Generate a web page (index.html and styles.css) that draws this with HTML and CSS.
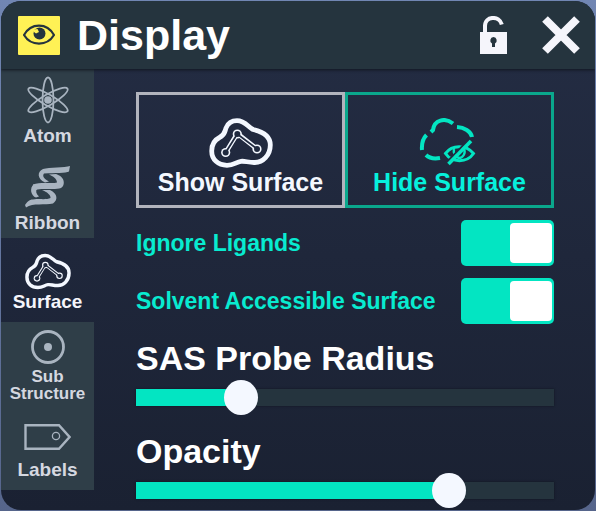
FILE: index.html
```html
<!DOCTYPE html>
<html lang="en">
<head>
<meta charset="utf-8">
<title>Display</title>
<link rel="stylesheet" href="styles.css">
</head>
<body>
<svg class="defs" aria-hidden="true">
  <symbol id="surface" viewBox="0 0 64 50">
    <path d="M28 2.7C36 2.7 39 9 44 11.5C53 13.5 61.3 18 61.3 27C61.3 37 54 45 45 44.5C39 44.5 36 42.8 32 43.3C27 44 25 47.3 18 47.3C9 47.3 2.7 41.5 2.7 33C2.7 26 5.500 22 10.500 19.5C16 17 15.500 14 17 10C19 5 23 2.700 28 2.700Z" fill="none" stroke="currentColor" stroke-width="4.800"/>
    <g fill="none" stroke="currentColor" stroke-width="4.600"><path d="M17 34L28.300 15.500L48 31"/></g>
    <g fill="currentColor"><circle cx="28.300" cy="16" r="4.600"/><circle cx="16.700" cy="34.500" r="4.600"/><circle cx="48" cy="31" r="4.600"/></g>
    <path class="hollow-line" d="M17 34L28.300 16L48 31"/>
    <g class="hollow"><circle cx="28.300" cy="16" r="3"/><circle cx="16.700" cy="34.500" r="3"/><circle cx="48" cy="31" r="3"/></g>
  </symbol>
</svg>
<div class="panel">
  <header class="header">
    <span class="badge">
      <svg width="32" height="22" viewBox="0 0 32 22" aria-hidden="true">
        <path d="M1 11C8-1.500 24-1.500 31 11C24 22.500 8 22.500 1 11Z" fill="none" stroke="currentColor" stroke-width="2.200"/>
        <circle cx="16.500" cy="9.500" r="6" fill="currentColor"/>
        <path d="M11 5.500L14.500 5L16 8L13 9.500L11 8Z" fill="#fff155"/>
      </svg>
    </span>
    <h1 class="title">Display</h1>
    <button class="icon-button" type="button" aria-label="Unlock panel">
      <svg width="27" height="38" viewBox="0 0 27 38" aria-hidden="true">
        <path d="M5 17V10C5-.5 19.500-.5 21.800 8.500" fill="none" stroke="currentColor" stroke-width="4"/>
        <path d="M0 16H27V38H0Z" fill="currentColor"/>
        <path class="keyhole" d="M13.500 21A3.500 3.500 0 0 0 12 27.500V31H15V27.500A3.500 3.500 0 0 0 13.500 21Z"/>
      </svg>
    </button>
    <button class="icon-button" type="button" aria-label="Close">
      <svg width="38" height="38" viewBox="0 0 38 38" aria-hidden="true"><path d="M3 3L35 35M35 3L3 35" stroke="currentColor" stroke-width="8"/></svg>
    </button>
  </header>
  <div class="body">
    <nav class="tabs" aria-label="Display sections">
      <button class="tab tab-atom" type="button">
        <svg width="42" height="48" viewBox="-21 -24 42 48" aria-hidden="true">
          <g fill="none" stroke="currentColor" stroke-width="1.800"><ellipse rx="5.500" ry="22.500"/><ellipse rx="5.500" ry="22.500" transform="rotate(60)"/><ellipse rx="5.500" ry="22.500" transform="rotate(-60)"/></g>
          <circle r="3.800" fill="currentColor"/>
        </svg>
        <span>Atom</span>
      </button>
      <button class="tab tab-ribbon" type="button">
        <svg width="46" height="42" viewBox="0 0 46 42" aria-hidden="true">
          <g fill="currentColor">
            <path d="M45 0C40 2 24 1 18 3C12 5.500 12 13 20 16.500L24 15.500C19 13 17 10 19 7.500C30 7 41 7 44 5.500Z"/>
            <path d="M24 8.500L31 8C41 11 40 20 36 22C30 24.500 16 21.500 11 24L8 18.500C16 15.500 27 18 32 16.500C32 13 28 10 24 8.500Z"/>
            <path d="M9 18C4 22 6 30 11 31.500L14 30.500C11 28 10.500 25 12 22.500Z"/>
            <path d="M17 24L25 24C33 28 33 34 28 37.500C20 39.500 8 36.500 1 41.500L0 39C2 36 4 33.500 8 33.500C15 32.500 22 34 25.500 32C26 29 22 26 17 24Z"/>
          </g>
        </svg>
        <span>Ribbon</span>
      </button>
      <button class="tab tab-active" type="button" aria-current="page">
        <svg width="46" height="37" aria-hidden="true"><use href="#surface"/></svg>
        <span>Surface</span>
      </button>
      <button class="tab tab-sub" type="button">
        <svg width="34" height="34" viewBox="0 0 34 34" aria-hidden="true"><circle cx="17" cy="17" r="15.500" fill="none" stroke="currentColor" stroke-width="2.800"/><circle cx="17" cy="17" r="4" fill="currentColor"/></svg>
        <span class="two-lines">Sub Structure</span>
      </button>
      <button class="tab" type="button">
        <svg class="tag" width="47" height="26" viewBox="0 0 47 26" aria-hidden="true"><g fill="none" stroke="currentColor"><path d="M1.500 1.300H35L45.500 13L35 24.700H1.500Z" stroke-width="2.400"/><circle cx="32" cy="12" r="3.600" stroke-width="1.300"/></g></svg>
        <span>Labels</span>
      </button>
    </nav>
    <main class="content">
      <div class="choices">
        <button class="choice" type="button">
          <svg width="64" height="50" aria-hidden="true"><use href="#surface"/></svg>
          <span>Show Surface</span>
        </button>
        <button class="choice choice-hide" type="button">
          <svg width="64" height="50" viewBox="-2 0 64 50" aria-hidden="true">
            <g fill="none" stroke="currentColor" stroke-width="4">
              <path d="M11 14L13 12C14 2 25-1 33 5.500M37 9C44 9.500 51 13 52 19M6.500 17C2.500 21 1.500 26 2 32M6 37C9 40 14 41 20 40"/>
              <path d="M25.500 35.500C32 26.500 46 26.500 53.500 35.500C47 45 32 45 25.500 35.500Z" stroke-width="3"/>
              <path d="M34 31C33 35 35 39 39 40C43 40 46 35 44 31" stroke-width="2.400"/>
            </g>
            <path class="slash-gap" d="M26.500 44.500L49 21.500"/>
            <path d="M28.500 46L51 23" stroke="currentColor" stroke-width="3.600"/>
          </svg>
          <span>Hide Surface</span>
        </button>
      </div>
      <div class="option"><label for="ligands">Ignore Ligands</label><input class="switch" id="ligands" type="checkbox" role="switch" checked></div>
      <div class="option"><label for="sas">Solvent Accessible Surface</label><input class="switch" id="sas" type="checkbox" role="switch" checked></div>
      <div class="range-group">
        <label for="radius">SAS Probe Radius</label>
        <input class="slider" id="radius" type="range" min="0" max="100" value="23" style="--value: 0.23">
      </div>
      <div class="range-group">
        <label for="opacity">Opacity</label>
        <input class="slider" id="opacity" type="range" min="0" max="100" value="77" style="--value: 0.77">
      </div>
    </main>
  </div>
</div>
</body>
</html>
```
FILE: styles.css
```css
* { box-sizing: border-box; }

body {
  margin: 0;
  min-height: 100vh;
  display: flex;
  padding: 1px;
  background: linear-gradient(#7186b3, #56658b);
  font-family: "Liberation Sans", Arial, sans-serif;
  font-weight: 700;
}

button {
  margin: 0;
  padding: 0;
  border: 0;
  background: none;
  color: inherit;
  font: inherit;
}

svg { display: block; flex: none; }

.defs { position: absolute; width: 0; height: 0; }

.panel {
  flex: 1;
  display: flex;
  flex-direction: column;
  border-radius: 20px;
  overflow: hidden;
  background: linear-gradient(#242d44, #1a2132);
}

.header {
  position: relative;
  display: flex;
  align-items: center;
  height: 68px;
  padding: 0 15px 0 17px;
  background: #25343e;
  color: #f5f5fb;
  box-shadow: 0 1px 3px #10151f;
}

.badge {
  display: grid;
  place-items: center;
  width: 42px;
  height: 39px;
  border-radius: 1px;
  background: #fff155;
  color: #25343e;
}

.title {
  flex: 1;
  margin: 0 0 0 17px;
  font-size: 43px;
  line-height: 48px;
  color: #fff;
}

.icon-button { margin-left: 35px; }

.keyhole { fill: #25343e; }

.body { flex: 1; display: flex; }

.tabs { width: 93px; }

.tab {
  display: flex;
  flex-direction: column;
  align-items: center;
  justify-content: flex-end;
  gap: 1px;
  width: 100%;
  height: 84px;
  padding-bottom: 9px;
  background: #2f3e48;
  color: #a9b4c0;
  font-size: 19px;
  line-height: 22px;
}

.tab span { color: #d5d8e0; }

.tab-atom { height: 85px; padding-bottom: 7px; }

.tab-ribbon { gap: 4px; padding-bottom: 4px; }

.tab-sub { gap: 4px; padding-bottom: 4px; }

.tab .two-lines {
  width: min-content;
  font-size: 17px;
  line-height: 17px;
}

.tag { margin-bottom: 8px; }

.tab-active { background: none; color: #f4f8ff; }

.tab-active span { color: #f5f5fb; }

.hollow { fill: #202a3f; }

.hollow-line { fill: none; stroke: #202a3f; stroke-width: 1.800; }

.content { flex: 1; padding: 23px 41px 0 42px; }

.choices { display: flex; }

.choice {
  flex: 1;
  display: flex;
  flex-direction: column;
  align-items: center;
  height: 116px;
  padding-top: 23px;
  border: 3px solid #b2b4bd;
  color: #f4f8ff;
  font-size: 25px;
  line-height: 28px;
}

.choice-hide { border-color: #0aa78c; color: #03e5c2; }

.choice-hide span { color: #06f0dc; }

.slash-gap { stroke: #222b41; stroke-width: 2; }

.option {
  display: flex;
  align-items: center;
  justify-content: space-between;
  margin-top: 12px;
  color: #08ebd0;
  font-size: 23px;
}

.switch {
  appearance: none;
  display: flex;
  justify-content: flex-end;
  width: 93px;
  height: 46px;
  margin: 0;
  padding: 3px 2px;
  border-radius: 5px;
  background: #03e5c2;
}

.switch::before {
  content: "";
  width: 42px;
  border-radius: 4px;
  background: #fff;
}

.switch:not(:checked) { justify-content: flex-start; background: #25343e; }

.range-group {
  display: flex;
  flex-direction: column;
  gap: 2px;
  margin-top: 14px;
  color: #fff;
  font-size: 34px;
  line-height: 40px;
}

.range-group + .range-group { margin-top: 16px; }

.slider {
  appearance: none;
  width: 100%;
  height: 35px;
  margin: 0;
  background: none;
}

.slider::-webkit-slider-runnable-track {
  height: 17px;
  background: linear-gradient(#03e5c2, #03e5c2) 0 0 / calc(17px + (100% - 34px) * var(--value)) 100% no-repeat #25343e;
  box-shadow: 0 0 2px #10151f;
}

.slider::-webkit-slider-thumb {
  appearance: none;
  width: 34px;
  height: 35px;
  margin-top: -9px;
  border-radius: 50%;
  background: #f4f8ff;
}
```
